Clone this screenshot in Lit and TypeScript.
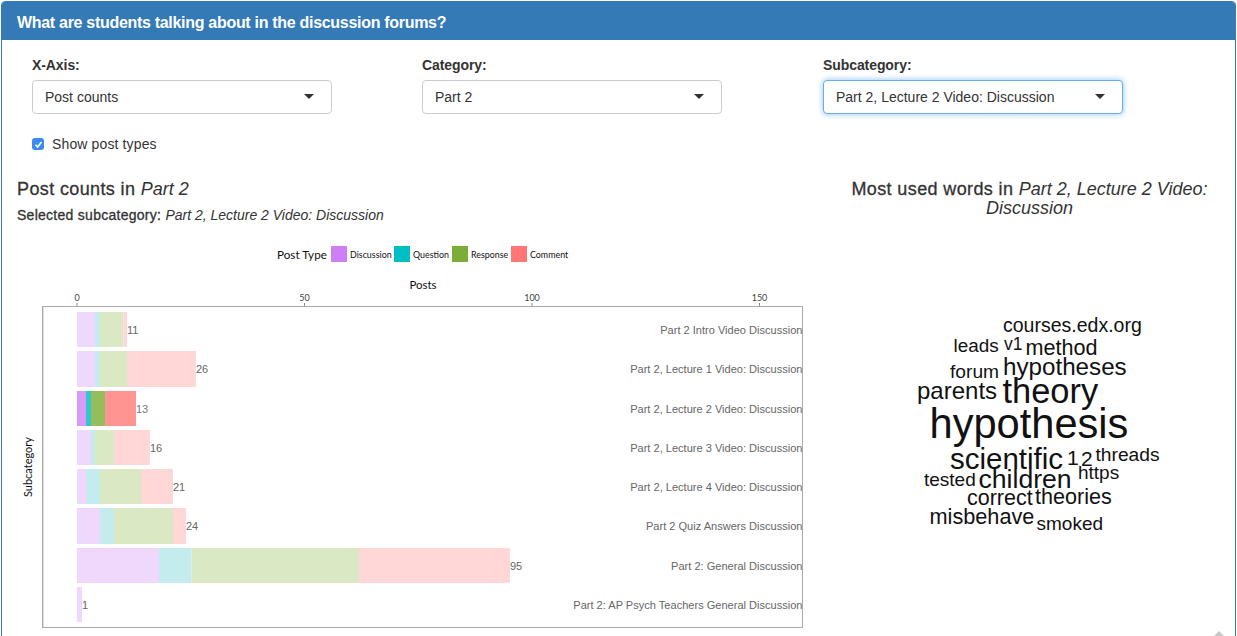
import { LitElement, html, css, svg } from "lit";
import { customElement } from "lit/decorators.js";

const C = ["#cf7ff5", "#00bfc4", "#7cae37", "#ff7674"];
const LIGHT = ["#f0d8fc", "#c4ecee", "#dbe8c4", "#ffd7d7"];
const STRONG = ["#d89bf8", "#33c6cc", "#96bd5c", "#ff9490"];
const ROWS: { label: string; n: number; top: number; bottom: number; xs: number[]; strong?: boolean }[] = [
  { label: "Part 2 Intro Video Discussion", n: 11, top: 312, bottom: 347, xs: [77, 95, 100, 123.3, 127] },
  { label: "Part 2, Lecture 1 Video: Discussion", n: 26, top: 351, bottom: 387, xs: [77, 95, 100, 127, 196] },
  { label: "Part 2, Lecture 2 Video: Discussion", n: 13, top: 391, bottom: 426, xs: [77, 86, 91, 105, 136], strong: true },
  { label: "Part 2, Lecture 3 Video: Discussion", n: 16, top: 430, bottom: 465, xs: [77, 91, 95, 114, 150] },
  { label: "Part 2, Lecture 4 Video: Discussion", n: 21, top: 469, bottom: 504, xs: [77, 86, 100, 141, 173] },
  { label: "Part 2 Quiz Answers Discussion", n: 24, top: 508, bottom: 544, xs: [77, 100, 114, 173, 186] },
  { label: "Part 2: General Discussion", n: 95, top: 548, bottom: 583, xs: [77, 159, 191.5, 359, 510] },
  { label: "Part 2: AP Psych Teachers General Discussion", n: 1, top: 587, bottom: 622, xs: [77, 82] },
];
const WORDS: [string, number, number, number][] = [
  ["courses.edx.org", 1003, 332, 19.5],
  ["leads", 953.5, 352, 18.9],
  ["v1", 1004, 350, 17.5],
  ["method", 1025.5, 355, 21.6],
  ["hypotheses", 1003, 375, 24.2],
  ["forum", 950, 378, 19.2],
  ["parents", 917, 399, 24],
  ["theory", 1002.5, 403, 34.4],
  ["hypothesis", 929.5, 438, 41.6],
  ["scientific", 950, 469, 29.5],
  ["1", 1067, 465, 21],
  ["2", 1081, 466, 21],
  ["threads", 1095.5, 461, 19.2],
  ["https", 1078, 479, 19],
  ["tested", 924, 486, 19],
  ["children", 978.5, 488, 26.6],
  ["correct", 967, 505, 21.5],
  ["theories", 1035, 504, 21.6],
  ["misbehave", 929.5, 524, 21.7],
  ["smoked", 1036.5, 530, 19],
];
const LEGEND: [string, number][] = [["Discussion", 331], ["Question", 394], ["Response", 452], ["Comment", 511]];
const OX = 17;
const OY = 236;

@customElement("app-root")
export class AppRoot extends LitElement {
  static styles = css`
    :host { display: block; height: 636px; overflow: hidden; background: #fff; font-family: "Liberation Sans", Arial, sans-serif; color: #333; position: relative; }
    .panel { margin: 1px 1px 0 1px; width: 1235px; box-sizing: border-box; height: 660px; border: 1px solid #337ab7; border-radius: 4px; }
    .head { background: #337ab7; color: #fff; height: 38px; padding: 0 15px; font-size: 16px; letter-spacing: -0.3px; font-weight: bold; line-height: 42px; border-radius: 3px 3px 0 0; }
    .filters { display: grid; grid-template-columns: 390px 401px 300px; padding: 17px 0 0 30px; }
    .lab { font-size: 14px; font-weight: bold; line-height: 16px; margin-bottom: 7px; letter-spacing: -0.08px; }
    .sel { width: 300px; height: 34px; box-sizing: border-box; border: 1px solid #ccc; border-radius: 4px; display: flex; align-items: center; justify-content: space-between; padding: 0 17px 0 12px; font-size: 14px; background: #fff; color: #333; }
    .sel.focus { border-color: #66afe9; box-shadow: 0 0 6px rgba(102, 175, 233, 0.75); }
    .caret { width: 0; height: 0; border-left: 5px solid transparent; border-right: 5px solid transparent; border-top: 5px solid #333; margin-top: -2px; }
    .check { display: flex; align-items: center; gap: 8px; margin: 20px 0 0 30px; height: 20px; font-size: 14px; letter-spacing: 0.13px; }
    .box { width: 12px; height: 12px; border-radius: 3px; background: #3b8bf3; display: flex; align-items: center; justify-content: center; }
    .cols { display: flex; margin-top: 26px; padding-left: 15px; }
    .left { width: 824px; flex: none; }
    .right { width: 377px; flex: none; text-align: center; }
    h4 { margin: 0; font-size: 18px; font-weight: 400; line-height: 19px; letter-spacing: 0.38px; -webkit-text-stroke: 0.3px #333; }
    h4 i { -webkit-text-stroke: 0; letter-spacing: 0; }
    h5 { margin: 8px 0 0; font-size: 14px; font-weight: 400; line-height: 16px; letter-spacing: 0.27px; -webkit-text-stroke: 0.3px #333; }
    h5 i { -webkit-text-stroke: 0; letter-spacing: 0; }
    svg { display: block; }
    .chart { margin-top: 14px; overflow: visible; }
    .gill { font-family: Lato, sans-serif; fill: #111; }
    .arial { font-family: "Liberation Sans", Arial, sans-serif; }
    .cloud { font-family: "Liberation Sans", Arial, sans-serif; fill: #111; position: absolute; left: 0; top: 0; pointer-events: none; }
    .thumb { position: absolute; left: 1214px; top: 631px; width: 10px; height: 5px; }
  `;

  private chart() {
    return svg`<svg class="chart" width="810" height="400" viewBox="${OX} ${OY} 810 400">
      <text class="gill" x="277" y="258" font-size="11.7">Post Type</text>
      ${LEGEND.map(([t, x], i) => svg`
        <rect x=${x} y="245" width="16" height="16" fill=${C[i]}></rect>
        <text class="gill" x=${x + 19} y="257" font-size="8.9">${t}</text>`)}
      <text class="gill" x="423" y="288" font-size="11.5" text-anchor="middle">Posts</text>
      ${[0, 50, 100, 150].map((v) => {
        const x = 77 + v * 4.55;
        return svg`
          <text class="gill" x=${x} y="300" font-size="9" text-anchor="middle" style="fill:#444">${v}</text>
          <line x1=${x} x2=${x} y1="302" y2="305" stroke="#888"></line>`;
      })}
      ${ROWS.map((r) => svg`
        ${r.xs.slice(0, -1).map((x, i) => svg`
          <rect x=${x} y=${r.top - 1} width=${r.xs[i + 1] - x} height=${r.bottom - r.top} fill=${(r.strong ? STRONG : LIGHT)[i]}></rect>`)}
        <text class="arial" x=${r.xs[r.xs.length - 1]} y=${(r.top + r.bottom) / 2 + 3} font-size="11" fill=${r.strong ? "#777" : "#666"}>${r.n}</text>
        <text class="arial" x="802.5" y=${(r.top + r.bottom) / 2 + 3} font-size="11.05" fill="#666" text-anchor="end">${r.label}</text>`)}
      <rect x="42.5" y="305.5" width="760" height="321" fill="none" stroke="#aaa"></rect>
      <line x1="43.5" x2="43.5" y1="306" y2="626" stroke="#ddd"></line>
      <text class="gill" transform="translate(32 466) rotate(-90)" font-size="11" text-anchor="middle">Subcategory</text>
    </svg>`;
  }

  private cloud() {
    return svg`<svg class="cloud" width="1237" height="636">
      ${WORDS.map(([t, x, y, s]) => svg`<text x=${x} y=${y} font-size=${s}>${t}</text>`)}
    </svg>`;
  }

  render() {
    const f = (label: string, value: string, focus = false) => html`
      <div>
        <div class="lab">${label}</div>
        <div class="sel ${focus ? "focus" : ""}"><span>${value}</span><span class="caret"></span></div>
      </div>`;
    return html`
      <div class="panel">
        <div class="head">What are students talking about in the discussion forums?</div>
        <div class="filters">
          ${f("X-Axis:", "Post counts")}
          ${f("Category:", "Part 2")}
          ${f("Subcategory:", "Part 2, Lecture 2 Video: Discussion", true)}
        </div>
        <div class="check">
          <span class="box"><svg width="9" height="9" viewBox="0 0 9 9"><path d="M1.5 4.8 3.6 7 7.5 2" fill="none" stroke="#fff" stroke-width="1.6"></path></svg></span>
          <span>Show post types</span>
        </div>
        <div class="cols">
          <div class="left">
            <h4>Post counts in <i>Part 2</i></h4>
            <h5>Selected subcategory: <i>Part 2, Lecture 2 Video: Discussion</i></h5>
            ${this.chart()}
          </div>
          <div class="right">
            <h4>Most used words in <i>Part 2, Lecture 2 Video: Discussion</i></h4>
          </div>
        </div>
      </div>
      ${this.cloud()}
      <svg class="thumb" viewBox="0 0 10 5"><path d="M0 5 5 0 10 5Z" fill="#c8c8c8"></path></svg>
    `;
  }
}
